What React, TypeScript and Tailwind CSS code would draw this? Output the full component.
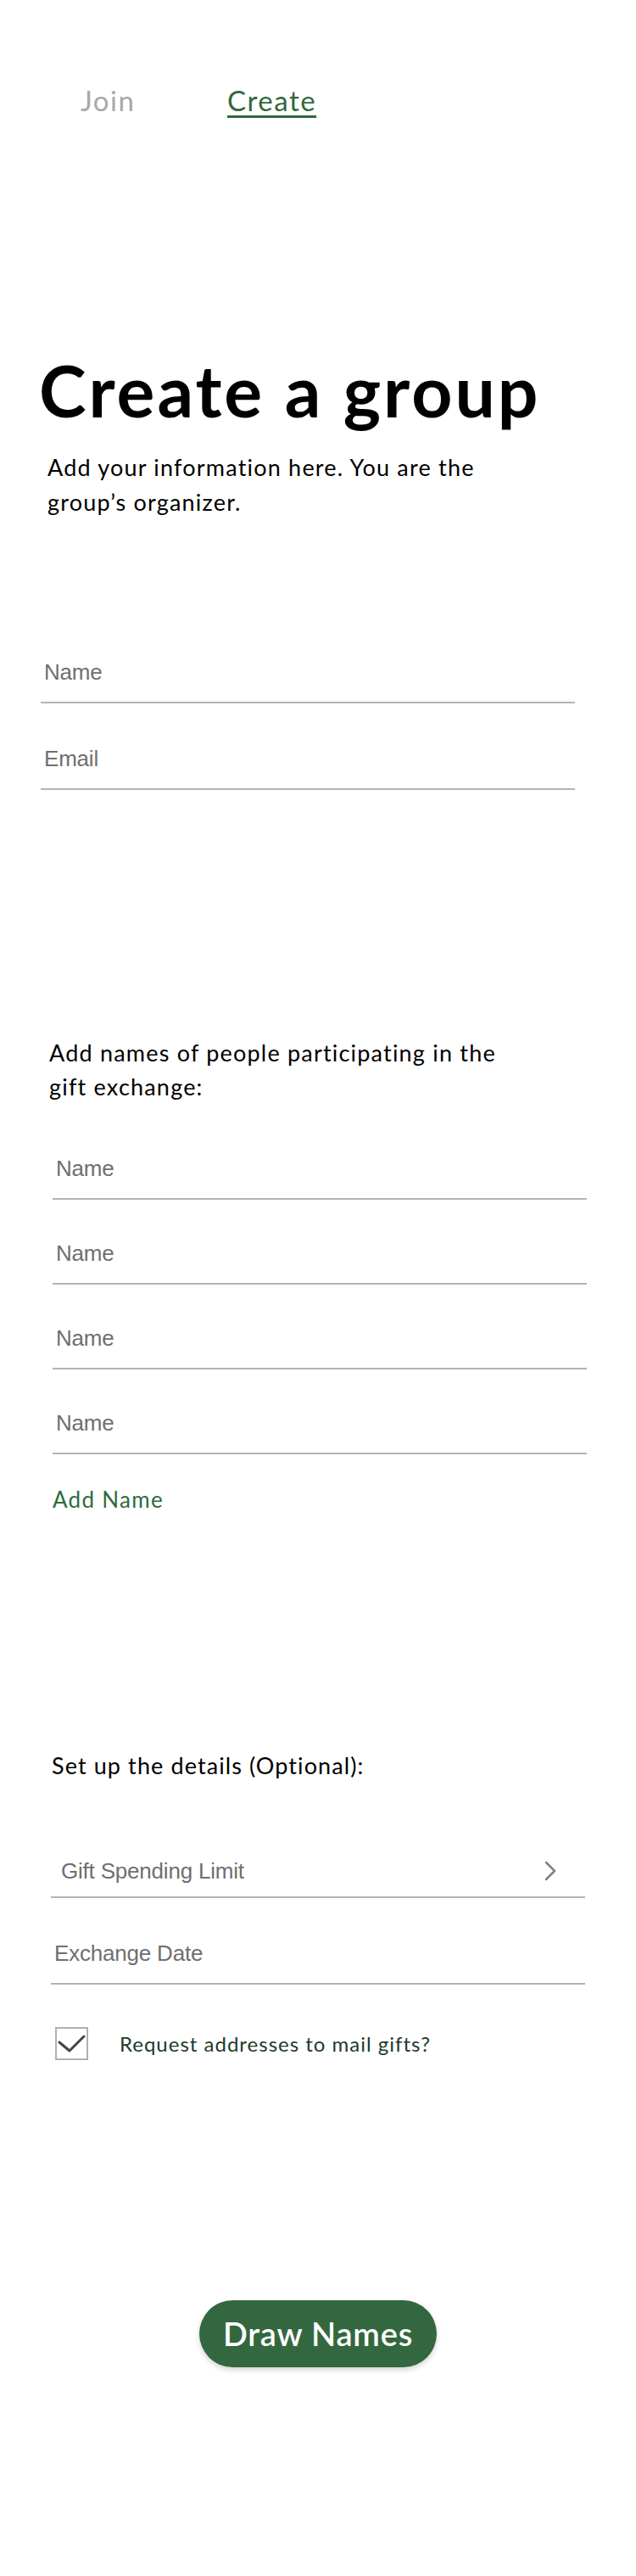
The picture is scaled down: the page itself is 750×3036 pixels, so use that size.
import React, { useState } from "react";

const lato = "font-['Lato','Open_Sans',sans-serif]";
const helv = "font-['Liberation_Sans','Arial',sans-serif]";

function LineInput({ placeholder }: { placeholder: string }) {
  return (
    <input
      type="text"
      placeholder={placeholder}
      className={`${helv} block w-full h-[60px] pb-[12px] pl-[4px] bg-transparent border-b-2 border-[#b4b4b4] text-[26px] tracking-[-0.2px] text-[#333] placeholder:text-[#6f6f6f] outline-none`}
    />
  );
}

function App() {
  const [tab, setTab] = useState<"join" | "create">("create");
  const [mail, setMail] = useState(true);
  const [names, setNames] = useState(["", "", "", ""]);

  return (
    <div className="w-[750px] min-h-[3036px] bg-white text-black">
      <nav className={`${lato} flex pt-[102px] pl-[95px] text-[33px] leading-none tracking-[1.5px]`}>
        <button
          onClick={() => setTab("join")}
          className={`w-[173px] text-left ${tab === "join" ? "text-[#33673f] underline decoration-[3px] underline-offset-[5px]" : "text-[#a8a8a8]"}`}
        >
          Join
        </button>
        <button
          onClick={() => setTab("create")}
          className={`text-left ${tab === "create" ? "text-[#33673f] underline decoration-[3px] underline-offset-[5px]" : "text-[#a8a8a8]"}`}
        >
          Create
        </button>
      </nav>

      <section className="mt-[283px] pl-[46px]">
        <h1 className={`${lato} font-bold text-[84px] leading-none tracking-[3px]`}>Create a group</h1>
        <p className={`${lato} mt-[28px] pl-[10px] w-[570px] text-[27px] leading-[41px] tracking-[1.2px]`}>
          Add your information here. You are the group’s organizer.
        </p>
      </section>

      <div className="mt-[157px] ml-[48px] w-[630px] flex flex-col gap-[42px]">
        <LineInput placeholder="Name" />
        <LineInput placeholder="Email" />
      </div>

      <section className="mt-[290px] ml-[62px] w-[630px]">
        <p className={`${lato} -ml-[4px] w-[560px] text-[27px] leading-[40px] tracking-[1.2px]`}>
          Add names of people participating in the gift exchange:
        </p>
        <div className="mt-[53px] flex flex-col gap-[40px]">
          {names.map((_, i) => (
            <LineInput key={i} placeholder="Name" />
          ))}
        </div>
        <button
          onClick={() => setNames([...names, ""])}
          className={`${lato} block mt-[40px] text-[26px] leading-none tracking-[1.3px] text-[#2e6a3e]`}
        >
          Add Name
        </button>
      </section>

      <section className="mt-[281px] ml-[60px] w-[630px]">
        <p className={`${lato} ml-[1px] text-[27px] leading-[40px] tracking-[1.1px]`}>Set up the details (Optional):</p>

        <div className="mt-[74px] flex items-center justify-between h-[62px] pl-[12px] pr-[34px] border-b-2 border-[#b4b4b4]">
          <span className={`${helv} text-[26px] leading-[30px] tracking-[-0.2px] text-[#6f6f6f]`}>Gift Spending Limit</span>
          <svg width="14" height="24" viewBox="0 0 14 24" fill="none" stroke="#808080" strokeWidth="2.5" strokeLinecap="round" strokeLinejoin="round">
            <path d="M2 2 L12 12 L2 22" />
          </svg>
        </div>

        <div className="mt-[42px]">
          <LineInput placeholder="Exchange Date" />
        </div>

        <label className="mt-[50px] ml-[5px] flex items-center gap-[37px] cursor-pointer">
          <span
            onClick={() => setMail(!mail)}
            className="flex items-center justify-center w-[39px] h-[39px] border-2 border-[#b0b0b0]"
          >
            {mail && (
              <svg width="33" height="22" viewBox="0 0 33 22" fill="none" stroke="#444" strokeWidth="3" strokeLinecap="round" strokeLinejoin="round">
                <path d="M2 9 L14 19 L31 2" />
              </svg>
            )}
          </span>
          <span className={`${lato} text-[24px] leading-none tracking-[1px] text-[#1d3a2b]`}>Request addresses to mail gifts?</span>
        </label>
      </section>

      <div className="mt-[283px] flex justify-center">
        <button className={`${lato} w-[280px] h-[79px] rounded-full bg-[#33673f] text-white font-semibold text-[38px] tracking-[0.8px] shadow-[0_3px_6px_rgba(0,0,0,0.18)]`}>
          Draw Names
        </button>
      </div>
    </div>
  );
}

export default App;
